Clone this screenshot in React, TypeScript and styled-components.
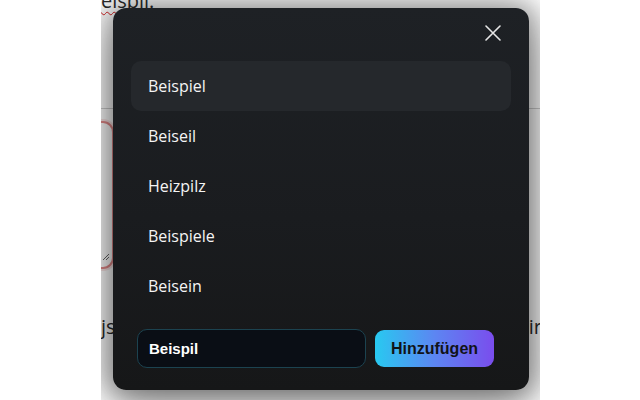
import React from "react";
import styled, { createGlobalStyle } from "styled-components";

const Global = createGlobalStyle`
  html, body { margin: 0; padding: 0; background: #ffffff; }
  body { width: 640px; height: 400px; overflow: hidden; }
  * { box-sizing: border-box; }
`;

const Screen = styled.div`
  width: 640px;
  height: 400px;
  display: flex;
  padding-left: 101px;
  background: #ffffff;
`;

const Frame = styled.div`
  position: relative;
  width: 439px;
  height: 400px;
  overflow: hidden;
  background: #ffffff;
  font-family: "Open Sans", "Noto Sans", sans-serif;
  color: #2b2b2b;
`;

const PageText = styled.div`
  font-size: 20px;
  line-height: 24px;
  white-space: nowrap;
`;

const Heading = styled(PageText)`
  margin-top: -11px;
  margin-left: -13px;
  span {
    text-decoration: underline wavy #d21f1f;
    text-decoration-thickness: 1px;
    text-underline-offset: 3px;
  }
`;

const Divider = styled.hr`
  margin: 95px 0 0;
  border: 0;
  border-top: 1px solid #cfcfcf;
`;

const FakeArea = styled.div`
  position: relative;
  margin: 12px 0 0 -300px;
  width: 313px;
  height: 148px;
  border: 2px solid #e58b8b;
  border-radius: 11px;
  box-shadow: 0 0 0 2px rgba(229, 120, 120, 0.2);
  background: #ffffff;
`;

const Grip = styled.svg`
  position: absolute;
  right: 2px;
  bottom: 6px;
`;

const TextLine = styled(PageText)`
  margin-top: 46px;
  display: flex;
  justify-content: space-between;
  margin-right: -2px;
`;

const Dialog = styled.div`
  position: absolute;
  left: 12px;
  top: 8px;
  width: 416px;
  height: 382px;
  border-radius: 13px;
  background: linear-gradient(180deg, #1e2125 0%, #1a1c1f 55%, #161718 100%);
  box-shadow: 0 0 24px 8px rgba(0, 0, 0, 0.28), 0 12px 44px rgba(0, 0, 0, 0.45);
  display: flex;
  flex-direction: column;
`;

const Header = styled.div`
  height: 53px;
  display: flex;
  align-items: center;
  justify-content: flex-end;
  padding-right: 28px;
  padding-bottom: 3px;
`;

const CloseButton = styled.button`
  width: 16px;
  height: 16px;
  padding: 0;
  border: 0;
  background: transparent;
  display: flex;
  align-items: center;
  justify-content: center;
  cursor: pointer;
`;

const List = styled.ul`
  list-style: none;
  margin: 0;
  padding: 0 18px;
  display: flex;
  flex-direction: column;
`;

const Item = styled.li<{ $active?: boolean }>`
  height: 50px;
  display: flex;
  align-items: center;
  padding-left: 17px;
  border-radius: 10px;
  font-family: "Open Sans", "Noto Sans", sans-serif;
  font-size: 16px;
  color: #f4f4f4;
  background: ${(p) => (p.$active ? "#25282c" : "transparent")};
`;

const Footer = styled.div`
  margin-top: 18px;
  display: flex;
  align-items: center;
  gap: 9px;
  padding: 0 35px 0 24px;
`;

const Input = styled.input`
  flex: 1;
  min-width: 0;
  height: 39px;
  padding: 0 11px;
  border: 1px solid #1c4350;
  border-radius: 10px;
  background: #0a0e15;
  color: #ffffff;
  font-family: "Liberation Sans", Arial, sans-serif;
  font-weight: 700;
  font-size: 15px;
  outline: none;
`;

const AddButton = styled.button`
  width: 119px;
  height: 37px;
  border: 0;
  border-radius: 9px;
  background: linear-gradient(90deg, #28c9f0 0%, #5c86f2 50%, #7a4ded 100%);
  color: #111318;
  font-family: "Liberation Sans", Arial, sans-serif;
  font-weight: 700;
  font-size: 16px;
  cursor: pointer;
`;

const suggestions = ["Beispiel", "Beiseil", "Heizpilz", "Beispiele", "Beisein"];

export default function App() {
  return (
    <>
      <Global />
      <Screen>
        <Frame>
          <Heading>
            <span>Beispil.</span>
          </Heading>
          <Divider />
          <FakeArea>
            <Grip width="8" height="8" viewBox="0 0 8 8">
              <path d="M7 1 L1 7 M7 4 L4 7" stroke="#666" strokeWidth="1" />
            </Grip>
          </FakeArea>
          <TextLine>
            <span>js</span>
            <span>ir</span>
          </TextLine>
          <Dialog>
            <Header>
              <CloseButton aria-label="Schließen">
                <svg width="16" height="16" viewBox="0 0 16 16">
                  <path
                    d="M1 1 L15 15 M15 1 L1 15"
                    stroke="#e6e6e6"
                    strokeWidth="1.6"
                    strokeLinecap="round"
                  />
                </svg>
              </CloseButton>
            </Header>
            <List>
              {suggestions.map((s, i) => (
                <Item key={s} $active={i === 0}>
                  {s}
                </Item>
              ))}
            </List>
            <Footer>
              <Input defaultValue="Beispil" />
              <AddButton>Hinzufügen</AddButton>
            </Footer>
          </Dialog>
        </Frame>
      </Screen>
    </>
  );
}
